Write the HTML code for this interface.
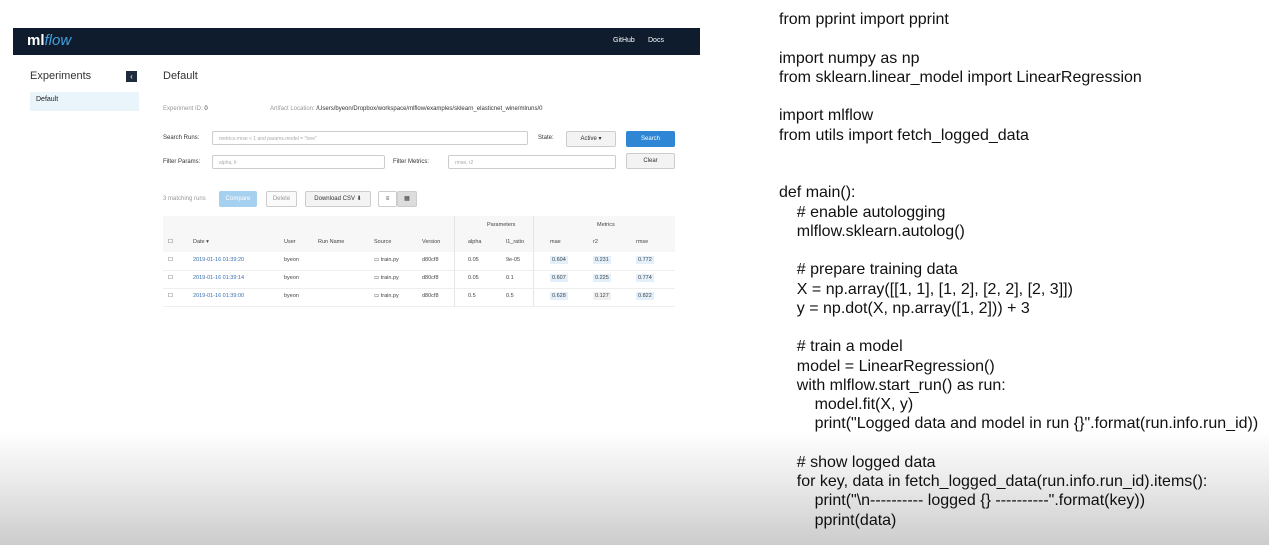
<!DOCTYPE html><html><head><style>
body{margin:0;width:1269px;height:545px;position:relative;overflow:hidden;background:#fff;font-family:"Liberation Sans",sans-serif;}
.a{position:absolute;white-space:nowrap}
.nav{left:13px;top:28px;width:687px;height:27px;background:#0f1c2e}
.code{left:779px;top:10px;font-size:16px;line-height:19.25px;color:#111;white-space:pre}
.fade{left:0;top:0;width:1269px;height:545px;background:linear-gradient(to bottom,rgba(0,0,0,0) 79%,rgba(0,0,0,.08) 88%,rgba(0,0,0,.2) 100%);pointer-events:none}
.s{font-size:6px;color:#333}
.g{color:#999}
.inp{position:absolute;border:1px solid #ccc;border-radius:2px;height:14px;background:#fff;font-size:5px;color:#aaa;line-height:14px;padding-left:6px;box-sizing:border-box}
.btn{position:absolute;border:1px solid #ccc;border-radius:2px;background:#f3f3f3;font-size:6px;color:#333;text-align:center;box-sizing:border-box}
.t{position:absolute;font-size:5.5px;color:#444}
.bl{color:#3b6fb0}
.m{background:#e3f0fc;padding:1px 2px}
</style></head><body>
<div class="a nav"></div>
<div class="a" style="left:27px;top:32px;font-size:15px;color:#fff;font-weight:bold">ml<span style="color:#43a0e0;font-style:italic;font-weight:normal">flow</span></div>
<div class="a" style="left:613px;top:37px;font-size:7px;color:#fff">GitHub</div>
<div class="a" style="left:648px;top:37px;font-size:7px;color:#fff">Docs</div>
<div class="a" style="left:30px;top:70px;font-size:11px;color:#333">Experiments</div>
<div class="a" style="left:126px;top:71px;width:11px;height:11px;background:#1e2b3c;color:#fff;font-size:8px;text-align:center;line-height:11px">&lsaquo;</div>
<div class="a" style="left:30px;top:92px;width:109px;height:19px;background:#e9f4fb"></div>
<div class="a" style="left:36px;top:96px;font-size:7px;color:#222">Default</div>
<div class="a" style="left:163px;top:70px;font-size:11px;color:#333">Default</div>
<div class="a s" style="left:163px;top:106px"><span class="g">Experiment ID:</span> 0</div>
<div class="a s" style="left:270px;top:106px"><span class="g">Artifact Location:</span> /Users/byeon/Dropbox/workspace/mlflow/examples/sklearn_elasticnet_wine/mlruns/0</div>
<div class="a s" style="left:163px;top:135px">Search Runs:</div>
<div class="inp" style="left:212px;top:131px;width:316px">metrics.rmse &lt; 1 and params.model = "tree"</div>
<div class="a s" style="left:538px;top:135px">State:</div>
<div class="btn" style="left:566px;top:131px;width:50px;height:16px;line-height:14px">Active ▾</div>
<div class="btn" style="left:626px;top:131px;width:49px;height:16px;line-height:14px;background:#2f86d4;color:#fff;border-color:#2f86d4">Search</div>
<div class="a s" style="left:163px;top:159px">Filter Params:</div>
<div class="inp" style="left:212px;top:155px;width:173px">alpha, lr</div>
<div class="a s" style="left:393px;top:159px">Filter Metrics:</div>
<div class="inp" style="left:448px;top:155px;width:168px">rmse, r2</div>
<div class="btn" style="left:626px;top:153px;width:49px;height:16px;line-height:14px">Clear</div>
<div class="a s g" style="left:163px;top:196px">3 matching runs</div>
<div class="btn" style="left:219px;top:191px;width:38px;height:16px;line-height:14px;background:#a6d0ef;color:#fff;border-color:#a6d0ef">Compare</div>
<div class="btn" style="left:266px;top:191px;width:31px;height:16px;line-height:14px;color:#999;background:#fafafa">Delete</div>
<div class="btn" style="left:305px;top:191px;width:66px;height:16px;line-height:14px">Download CSV ⬇</div>
<div class="btn" style="left:378px;top:191px;width:19px;height:16px;line-height:14px;background:#fff">≡</div>
<div class="btn" style="left:397px;top:191px;width:20px;height:16px;line-height:14px;background:#ddd">▦</div>
<div class="a" style="left:163px;top:216px;width:512px;height:90px;border-top:1px solid #eee"></div>
<div class="a" style="left:163px;top:216px;width:512px;height:36px;background:#f7f7f7"></div>
<div class="a" style="left:454px;top:216px;width:1px;height:90px;background:#e5e5e5"></div>
<div class="a" style="left:533px;top:216px;width:1px;height:90px;background:#e5e5e5"></div>
<div class="t" style="left:487px;top:222px">Parameters</div>
<div class="t" style="left:597px;top:222px">Metrics</div>
<div class="t" style="left:168px;top:239px">☐</div><div class="t" style="left:193px;top:239px">Date ▾</div><div class="t" style="left:284px;top:239px">User</div><div class="t" style="left:318px;top:239px">Run Name</div><div class="t" style="left:374px;top:239px">Source</div><div class="t" style="left:422px;top:239px">Version</div><div class="t" style="left:468px;top:239px">alpha</div><div class="t" style="left:506px;top:239px">l1_ratio</div><div class="t" style="left:550px;top:239px">mae</div><div class="t" style="left:593px;top:239px">r2</div><div class="t" style="left:636px;top:239px">rmse</div>
<div class="a" style="left:163px;top:270px;width:512px;height:1px;background:#eee"></div>
<div class="a" style="left:163px;top:288px;width:512px;height:1px;background:#eee"></div>
<div class="a" style="left:163px;top:306px;width:512px;height:1px;background:#eee"></div>
<div class="t" style="left:168px;top:257px">☐</div><div class="t bl" style="left:193px;top:257px">2019-01-16 01:39:20</div><div class="t" style="left:284px;top:257px">byeon</div><div class="t" style="left:374px;top:257px">▭ train.py</div><div class="t" style="left:422px;top:257px">d80cf8</div><div class="t" style="left:468px;top:257px">0.05</div><div class="t" style="left:506px;top:257px">9e-05</div><div class="t" style="left:550px;top:257px"><span class="m">0.604</span></div><div class="t" style="left:593px;top:257px"><span class="m">0.231</span></div><div class="t" style="left:636px;top:257px"><span class="m">0.772</span></div>
<div class="t" style="left:168px;top:275px">☐</div><div class="t bl" style="left:193px;top:275px">2019-01-16 01:39:14</div><div class="t" style="left:284px;top:275px">byeon</div><div class="t" style="left:374px;top:275px">▭ train.py</div><div class="t" style="left:422px;top:275px">d80cf8</div><div class="t" style="left:468px;top:275px">0.05</div><div class="t" style="left:506px;top:275px">0.1</div><div class="t" style="left:550px;top:275px"><span class="m">0.607</span></div><div class="t" style="left:593px;top:275px"><span class="m">0.225</span></div><div class="t" style="left:636px;top:275px"><span class="m">0.774</span></div>
<div class="t" style="left:168px;top:293px">☐</div><div class="t bl" style="left:193px;top:293px">2019-01-16 01:39:00</div><div class="t" style="left:284px;top:293px">byeon</div><div class="t" style="left:374px;top:293px">▭ train.py</div><div class="t" style="left:422px;top:293px">d80cf8</div><div class="t" style="left:468px;top:293px">0.5</div><div class="t" style="left:506px;top:293px">0.5</div><div class="t" style="left:550px;top:293px"><span class="m">0.628</span></div><div class="t" style="left:593px;top:293px"><span class="m" style="background:#f0f0f0">0.127</span></div><div class="t" style="left:636px;top:293px"><span class="m">0.822</span></div>
<div class="a code">from pprint import pprint

import numpy as np
from sklearn.linear_model import LinearRegression

import mlflow
from utils import fetch_logged_data


def main():
    # enable autologging
    mlflow.sklearn.autolog()

    # prepare training data
    X = np.array([[1, 1], [1, 2], [2, 2], [2, 3]])
    y = np.dot(X, np.array([1, 2])) + 3

    # train a model
    model = LinearRegression()
    with mlflow.start_run() as run:
        model.fit(X, y)
        print("Logged data and model in run {}".format(run.info.run_id))

    # show logged data
    for key, data in fetch_logged_data(run.info.run_id).items():
        print("\n---------- logged {} ----------".format(key))
        pprint(data)</div>
<div class="a fade"></div>
</body></html>
